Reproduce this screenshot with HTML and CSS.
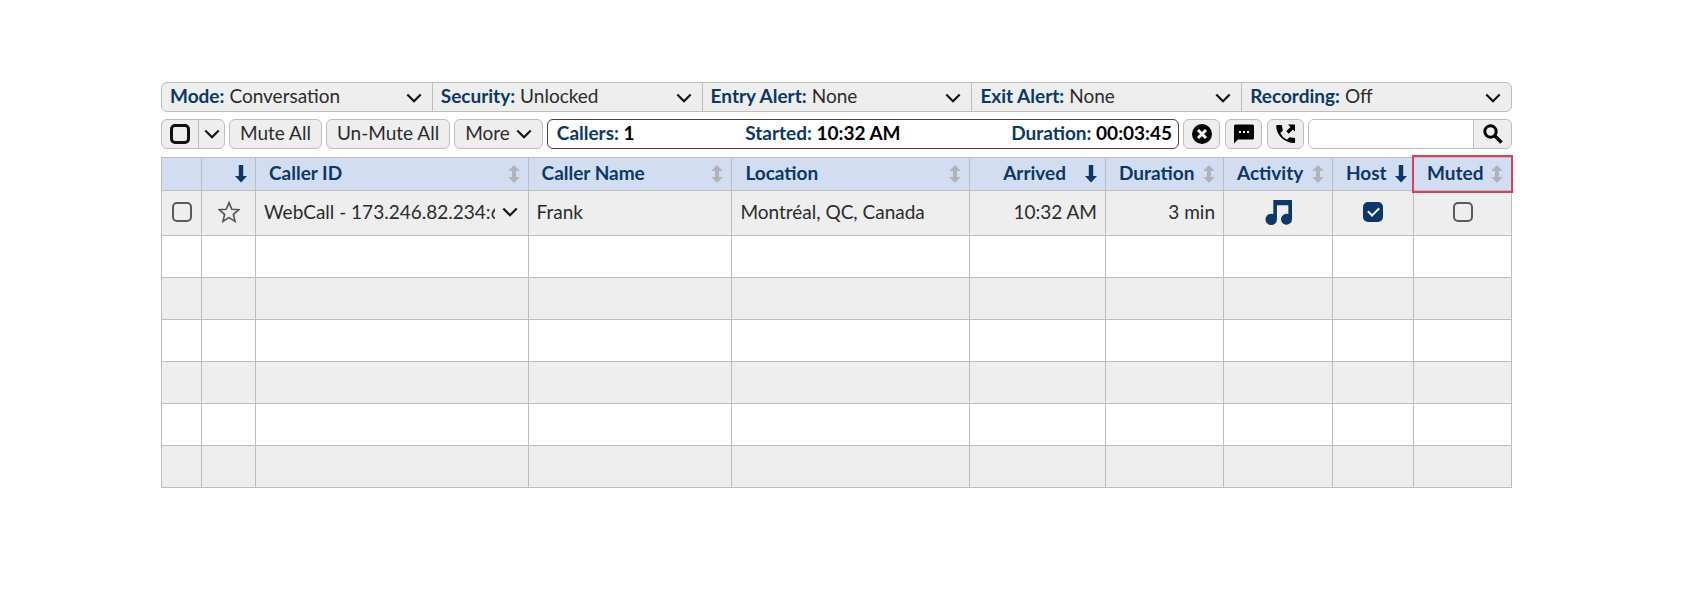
FILE: index.html
```html
<!DOCTYPE html>
<html lang="en">
<head>
<meta charset="utf-8">
<title>Conference Callers</title>
<link rel="stylesheet" href="styles.css">
</head>
<body>
<svg class="sprite" aria-hidden="true">
  <symbol id="chevron" viewBox="0 0 16 10"><path d="M1.300 1.500 8 8.200l6.700-6.700" fill="none" stroke="currentColor" stroke-width="2.200"/></symbol>
  <symbol id="down" viewBox="0 0 12 18"><path d="M3.800 0h4.400v11H12l-6 6.500L0 11h3.800z" fill="currentColor"/></symbol>
  <symbol id="both" viewBox="0 0 12 18"><path d="M6 0l5.800 6H8v6h3.800L6 18 .2 12H4V6H.2z" fill="currentColor"/></symbol>
</svg>
<main class="conference">
  <section class="modes">
    <div class="mode"><label for="mode">Mode:</label><select id="mode"><option>Conversation</option></select><svg class="chevron"><use href="#chevron"/></svg></div>
    <div class="mode"><label for="security">Security:</label><select id="security"><option>Unlocked</option></select><svg class="chevron"><use href="#chevron"/></svg></div>
    <div class="mode"><label for="entry">Entry Alert:</label><select id="entry"><option>None</option></select><svg class="chevron"><use href="#chevron"/></svg></div>
    <div class="mode"><label for="exit">Exit Alert:</label><select id="exit"><option>None</option></select><svg class="chevron"><use href="#chevron"/></svg></div>
    <div class="mode"><label for="recording">Recording:</label><select id="recording"><option>Off</option></select><svg class="chevron"><use href="#chevron"/></svg></div>
  </section>

  <section class="toolbar">
    <div class="select-all">
      <span class="tick-cell"><input type="checkbox" class="tick strong" aria-label="Select all callers"></span>
      <button type="button" class="split" aria-label="Selection options"><svg class="chevron"><use href="#chevron"/></svg></button>
    </div>
    <button type="button" class="btn">Mute All</button>
    <button type="button" class="btn">Un-Mute All</button>
    <button type="button" class="btn more">More<svg class="chevron"><use href="#chevron"/></svg></button>
    <div class="status">
      <span>Callers: <b>1</b></span>
      <span>Started: <b>10:32 AM</b></span>
      <span>Duration: <b>00:03:45</b></span>
    </div>
    <div class="actions">
      <button type="button" class="btn icon" aria-label="End conference"><svg viewBox="0 0 20 20"><circle cx="10" cy="10" r="10"/><path d="M6 6l8 8M14 6l-8 8" stroke="#eee" stroke-width="3"/></svg></button>
      <button type="button" class="btn icon" aria-label="Messages"><svg viewBox="0 0 20 20"><path d="M1.500 .5h17A1.500 1.500 0 0 1 20 2v12a1.500 1.500 0 0 1-1.500 1.500H4L0 19.500V2A1.500 1.500 0 0 1 1.500 .5z"/><path d="M5 7h2v2H5zM9 7h2v2H9zM13 7h2v2h-2z" fill="#eee"/></svg></button>
      <button type="button" class="btn icon" aria-label="Dial out"><svg viewBox="0 0 20 20"><path d="M1.200 1h3.900q.9 0 1 .9.100 2 .7 3.800.2.700-.3 1.200L4.200 9.100a15.500 15.500 0 0 0 6.700 6.700l2.300-2.300q.5-.5 1.200-.3 1.800.6 3.700.6 1 .1 1 1.100V18q0 1-1 1C8.500 19 .2 11 .2 2q0-1 1-1z"/><path d="M12 .5h7v7l-2-2-4.300 4.300-2.500-2.500L14.500 3z"/></svg></button>
    </div>
    <form class="search" role="search">
      <input type="search" aria-label="Search callers">
      <button type="button" aria-label="Search"><svg viewBox="0 0 20 20"><circle cx="7.500" cy="7.500" r="5.700" fill="none" stroke="currentColor" stroke-width="3"/><path d="M11.500 11.500l7 7" stroke="currentColor" stroke-width="3.400"/></svg></button>
    </form>
  </section>

  <table class="callers">
    <colgroup><col class="c-tick"><col class="c-star"><col><col class="c-name"><col class="c-location"><col class="c-arrived"><col class="c-duration"><col class="c-activity"><col class="c-host"><col class="c-muted"></colgroup>
    <thead>
      <tr>
        <th scope="col"></th>
        <th scope="col"><button type="button" class="sort end" aria-label="Sort by favourite"><svg><use href="#down"/></svg></button></th>
        <th scope="col"><button type="button" class="sort">Caller ID<svg class="idle"><use href="#both"/></svg></button></th>
        <th scope="col"><button type="button" class="sort">Caller Name<svg class="idle"><use href="#both"/></svg></button></th>
        <th scope="col"><button type="button" class="sort">Location<svg class="idle"><use href="#both"/></svg></button></th>
        <th scope="col"><button type="button" class="sort end">Arrived<svg><use href="#down"/></svg></button></th>
        <th scope="col"><button type="button" class="sort">Duration<svg class="idle"><use href="#both"/></svg></button></th>
        <th scope="col"><button type="button" class="sort">Activity<svg class="idle"><use href="#both"/></svg></button></th>
        <th scope="col"><button type="button" class="sort">Host<svg><use href="#down"/></svg></button></th>
        <th scope="col" class="marked"><button type="button" class="sort">Muted<svg class="idle"><use href="#both"/></svg></button></th>
      </tr>
    </thead>
    <tbody>
      <tr class="caller">
        <td class="center"><input type="checkbox" class="tick" aria-label="Select Frank"></td>
        <td class="center"><button type="button" class="plain" aria-label="Add to favourites"><svg class="star" viewBox="0 0 20 20"><path d="M10 1.500l2.500 6 6.400.5-4.900 4.200 1.500 6.300L10 15.100l-5.500 3.400L6 12.200 1.100 8l6.400-.5z" fill="none" stroke="currentColor" stroke-width="1.500"/></svg></button></td>
        <td><div class="caller-id"><span>WebCall - 173.246.82.234:6</span><button type="button" class="plain" aria-label="Caller options"><svg class="chevron"><use href="#chevron"/></svg></button></div></td>
        <td>Frank</td>
        <td>Montréal, QC, Canada</td>
        <td class="right">10:32 AM</td>
        <td class="right">3 min</td>
        <td class="center"><svg class="music" viewBox="0 0 26 24" role="img" aria-label="Hold music"><path d="M8 0h18v18.500a5.300 5.300 0 1 1-3.500-5V5H11.500v13.500a5.500 5.500 0 1 1-3.500-5z"/></svg></td>
        <td class="center"><input type="checkbox" class="tick" aria-label="Frank is host" checked></td>
        <td class="center"><input type="checkbox" class="tick" aria-label="Mute Frank"></td>
      </tr>
      <tr><td></td><td></td><td></td><td></td><td></td><td></td><td></td><td></td><td></td><td></td></tr>
      <tr><td></td><td></td><td></td><td></td><td></td><td></td><td></td><td></td><td></td><td></td></tr>
      <tr><td></td><td></td><td></td><td></td><td></td><td></td><td></td><td></td><td></td><td></td></tr>
      <tr><td></td><td></td><td></td><td></td><td></td><td></td><td></td><td></td><td></td><td></td></tr>
      <tr><td></td><td></td><td></td><td></td><td></td><td></td><td></td><td></td><td></td><td></td></tr>
      <tr><td></td><td></td><td></td><td></td><td></td><td></td><td></td><td></td><td></td><td></td></tr>
    </tbody>
  </table>
</main>
</body>
</html>
```

FILE: styles.css
```css
:root {
  --navy: #0b3866;
  --line: #bdbdbd;
  --fill: #eeeeee;
  --ink: #2b2b2b;
}

* { box-sizing: border-box; }

body {
  margin: 0;
  background: #fff;
  color: var(--ink);
  font: 19px/24px Lato, "Liberation Sans", sans-serif;
}

button, input, select {
  font: inherit;
  color: inherit;
  margin: 0;
}

button {
  display: flex;
  align-items: center;
  justify-content: center;
  padding: 0;
  border: 0;
  background: none;
  cursor: pointer;
}

.sprite { position: absolute; width: 0; height: 0; }

.conference {
  display: flex;
  flex-direction: column;
  padding: 82px 169px 40px 161px;
}

.chevron { flex: none; width: 16px; height: 10px; color: #111; }

.modes {
  display: grid;
  grid-template-columns: repeat(5, 1fr);
  border: 1px solid var(--line);
  border-radius: 6px;
  background: var(--fill);
}

.mode {
  position: relative;
  display: flex;
  align-items: center;
  gap: 5px;
  padding-left: 8px;
  height: 28px;
}

.mode + .mode { border-left: 1px solid var(--line); }

.mode label { padding-bottom: 3px; color: var(--navy); font-weight: 700; }

.mode select {
  flex: 1;
  min-width: 0;
  height: 28px;
  padding: 0 0 3px;
  border: 0;
  background: none;
  appearance: none;
}

.mode .chevron {
  position: absolute;
  right: 10px;
  top: 10px;
  pointer-events: none;
}

.toolbar {
  display: flex;
  gap: 4px;
  height: 30px;
  margin-top: 7px;
}

.select-all, .search, .btn {
  display: flex;
  border: 1px solid var(--line);
  border-radius: 6px;
  background: var(--fill);
}

.tick-cell { display: flex; align-items: center; padding: 0 8px; border-right: 1px solid var(--line); }
.split { width: 25px; }
.btn { padding: 0 10px 2px; white-space: nowrap; }
.btn.more { gap: 6px; }
.btn.more .chevron { margin-top: 2px; }

.status {
  flex: 1;
  display: flex;
  justify-content: space-between;
  align-items: center;
  padding: 0 6px 3px 9px;
  border: 1px solid #444;
  border-radius: 6px;
  color: var(--navy);
  font-weight: 700;
  white-space: nowrap;
}

.status b { color: #000; font-weight: 700; }

.actions { display: flex; gap: 5px; }
.btn.icon { width: 37px; padding: 0; color: #000; }
.btn.icon svg, .search svg { width: 20px; height: 20px; }

.search { width: 204px; overflow: hidden; }

.search input {
  flex: 1;
  min-width: 0;
  padding: 0 8px;
  border: 0;
  background: #fff;
  appearance: none;
}

.search button { width: 38px; border-left: 1px solid var(--line); color: #000; }

.tick {
  display: grid;
  place-items: center;
  width: 20px;
  height: 20px;
  border: 2px solid #5a5a5a;
  border-radius: 5px;
  appearance: none;
}

.tick.strong { border: 3px solid #111; }
.tick:checked { border-color: var(--navy); background: var(--navy); }

.tick:checked::after {
  content: "";
  width: 5px;
  height: 9px;
  margin-bottom: 3px;
  border: solid #fff;
  border-width: 0 2px 2px 0;
  transform: rotate(45deg);
}

.callers {
  width: 100%;
  margin-top: 8px;
  table-layout: fixed;
  border-collapse: collapse;
}

.c-tick { width: 40px; }
.c-star { width: 54px; }
.c-name { width: 15.1%; }
.c-location { width: 17.6%; }
.c-arrived { width: 136px; }
.c-duration { width: 118px; }
.c-activity { width: 109px; }
.c-host { width: 81px; }
.c-muted { width: 98px; }

.callers th, .callers td {
  height: 42px;
  padding: 0 8px;
  border: 1px solid var(--line);
  white-space: nowrap;
}

.callers th {
  height: 33px;
  padding: 0 8px 0 13px;
  background: #d3ddf2;
}

.callers tbody tr:nth-child(odd) { background: var(--fill); }
.callers .caller td { height: 45px; padding-bottom: 2px; }
.callers .right { text-align: right; }
.callers .center { padding: 0 0 2px; }
.center > * { display: grid; margin: 0 auto; }

.sort {
  justify-content: space-between;
  gap: 8px;
  width: 100%;
  height: 28px;
  padding-bottom: 3px;
  color: var(--navy);
  font-weight: 700;
}

.sort.end { justify-content: flex-end; gap: 19px; }
.sort svg { flex: none; width: 12px; height: 18px; margin-top: 3px; }
.sort .idle { color: #b0b3ba; }

.marked { position: relative; }

.marked::after {
  content: "";
  position: absolute;
  inset: -3px -2px;
  border: 2px solid #d8405c;
  pointer-events: none;
}

.star { width: 22px; height: 22px; color: #555; }
.music { width: 27px; height: 25px; fill: var(--navy); }

.caller-id { display: flex; align-items: center; gap: 7px; }
.caller-id span { flex: 1; min-width: 0; overflow: hidden; }
.caller-id button { margin-right: 2px; }
```
